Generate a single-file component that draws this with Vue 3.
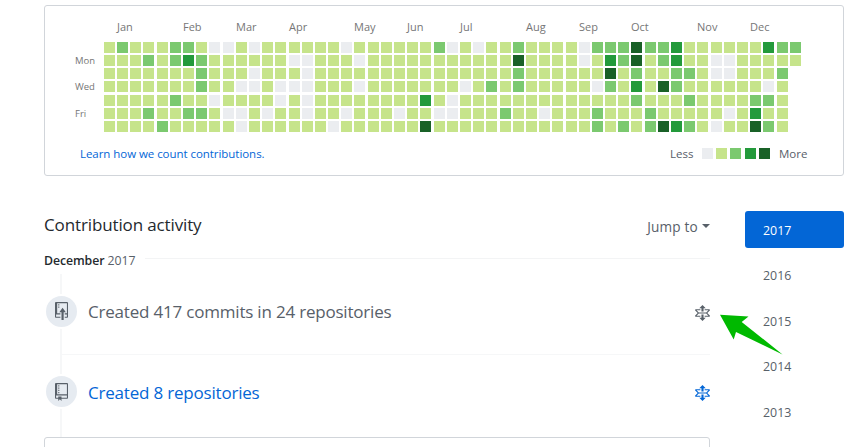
<script setup>
const exceptions = [
  { 1: 2, 5: 2, 6: 2, 8: 0, 9: 0, 11: 0, 18: 0, 25: 2, 26: 0, 28: 0, 31: 2, 36: 0, 37: 2, 38: 2, 39: 2, 40: 4, 41: 2, 42: 2, 43: 3, 50: 3, 51: 2, 52: 2 },
  { 3: 2, 5: 2, 6: 3, 7: 2, 14: 0, 15: 0, 19: 0, 31: 4, 36: 0, 38: 3, 39: 2, 40: 4, 42: 2, 43: 3, 46: 0, 47: 0 },
  { 7: 2, 11: 0, 15: 0, 31: 2, 38: 4, 40: 2, 43: 2, 44: 2, 46: 0, 47: 0, 51: 2 },
  { 7: 2, 10: 0, 11: 0, 13: 0, 14: 0, 15: 0, 19: 0, 27: 0, 29: 2, 31: 2, 37: 0, 38: 2, 40: 3, 42: 4, 43: 2, 50: 0 },
  { 5: 2, 8: 0, 13: 0, 15: 0, 24: 3, 26: 0, 40: 2, 44: 2, 49: 2, 50: 2 },
  { 3: 2, 6: 2, 7: 2, 9: 0, 10: 0, 12: 0, 15: 0, 18: 0, 22: 0, 25: 0, 26: 0, 30: 2, 33: 0, 37: 2, 41: 2, 47: 0, 49: 3 },
  { 4: 2, 10: 0, 17: 0, 24: 4, 37: 2, 39: 2, 41: 2, 42: 4, 43: 3, 44: 2, 46: 0, 49: 4, 50: 2 },
]
const months = { 1: 'Jan', 6: 'Feb', 10: 'Mar', 14: 'Apr', 19: 'May', 23: 'Jun', 27: 'Jul', 32: 'Aug', 36: 'Sep', 40: 'Oct', 45: 'Nov', 49: 'Dec' }
const wideGaps = [4, 9, 14, 20, 25, 30, 35, 41, 46, 51]
const weeks = Array.from({ length: 53 }, (_, w) => ({
  month: months[w] ?? '',
  wide: wideGaps.includes(w),
  days: exceptions.slice(0, w === 52 ? 2 : 7).map((row) => row[w] ?? 1),
}))
const years = [2017, 2016, 2015, 2014, 2013]
const pushIcon = 'M4 3H3V2h1v1zM3 5h1V4H3v1zm4 0L4 9h2v7h2V9h2L7 5zm4-5H1C.45 0 0 .45 0 1v12c0 .55.45 1 1 1h4v-1H1v-2h4v-1H2V1h9.02L11 10H9v1h2v2H9v1h2c.55 0 1-.45 1-1V1c0-.55-.45-1-1-1z'
const repoIcon = 'M4 9H3V8h1v1zm0-3H3v1h1V6zm0-2H3v1h1V4zm0-2H3v1h1V2zm8-1v12c0 .55-.45 1-1 1H6v2l-1.5-1.5L3 16v-2H1c-.55 0-1-.45-1-1V1c0-.55.45-1 1-1h10c.55 0 1 .45 1 1zm-1 10H1v2h2v-1h3v1h5v-2zm0-10H2v9h9V1z'
const unfoldIcon = 'M11.5 7.5L14 10c0 .55-.45 1-1 1H9v-1h3.5l-2-2h-7l-2 2H5v1H1c-.55 0-1-.45-1-1l2.5-2.5L0 5c0-.55.45-1 1-1h4v1H1.5l2 2h7l2-2H9V4h4c.55 0 1 .45 1 1l-2.5 2.5zM6 6h2V3h2L7 0 4 3h2v3zm2 3H6v3H4l3 3 3-3H8V9z'
const items = [
  { text: 'Created 417 commits in 24 repositories', icon: pushIcon, active: false },
  { text: 'Created 8 repositories', icon: repoIcon, active: true },
]
</script>

<template>
  <main class="page">
    <section class="card">
      <div class="graph">
        <div class="weekdays">
          <span>Mon</span><span>Wed</span><span>Fri</span>
        </div>
        <div v-for="(week, w) in weeks" :key="w" class="week" :class="{ wide: week.wide }">
          <span class="month">{{ week.month }}</span>
          <i v-for="(level, d) in week.days" :key="d" class="day" :class="'l' + level"></i>
        </div>
      </div>
      <div class="card-foot">
        <a class="learn">Learn how we count contributions.</a>
        <div class="legend">
          <span class="less">Less</span>
          <i v-for="n in 5" :key="n" class="swatch" :class="'l' + (n - 1)"></i>
          <span class="more">More</span>
        </div>
      </div>
    </section>

    <div class="columns">
      <section class="activity">
        <header class="head">
          <h2>Contribution activity</h2>
          <span class="jump">Jump to <i class="caret"></i></span>
        </header>
        <h3 class="period"><span><b>December</b> 2017</span></h3>
        <div class="timeline">
          <article v-for="item in items" :key="item.text" class="item" :class="{ active: item.active }">
            <span class="badge">
              <svg width="13" height="18" viewBox="0 0 12 16" preserveAspectRatio="none"><path :d="item.icon" /></svg>
            </span>
            <span class="label">{{ item.text }}</span>
            <svg class="unfold" width="15" height="16" viewBox="0 0 14 15" preserveAspectRatio="none"><path :d="unfoldIcon" /></svg>
          </article>
        </div>
        <div class="repo-list"></div>
      </section>
      <nav class="years">
        <a v-for="(year, i) in years" :key="year" :class="{ selected: i === 0 }">{{ year }}</a>
      </nav>
    </div>

    <svg class="pointer" width="64" height="42" viewBox="719 313 64 42">
      <path d="M720 314.7L748.5 316.4L741.7 322L782.5 354.4L736 332L733.7 339.4Z" />
    </svg>
  </main>
</template>

<style>
body { margin: 0; background: #fff; overflow: hidden; }
</style>

<style scoped>
.page {
  position: relative;
  box-sizing: border-box;
  width: 849px;
  height: 447px;
  padding: 5px 5px 0 44px;
  overflow: hidden;
  font-family: "Open Sans", "Noto Sans", sans-serif;
  color: #586069;
}
.card {
  box-sizing: border-box;
  width: 800px;
  height: 171px;
  border: 1px solid #d1d5da;
  border-radius: 3px;
}
.graph { display: flex; padding: 13px 0 0 30px; height: 114px; }
.weekdays {
  display: flex;
  flex-direction: column;
  box-sizing: border-box;
  width: 29px;
  padding-top: 35px;
  font-size: 9.5px;
  line-height: 14px;
  color: #767676;
}
.weekdays span { height: 26px; }
.weekdays span:last-child { padding-top: 1px; }
.week { width: 11px; margin-right: 2px; display: flex; flex-direction: column; gap: 2px; }
.week.wide { margin-left: 1px; }
.month {
  width: 11px;
  height: 21px;
  line-height: 15px;
  white-space: nowrap;
  font-size: 11px;
  color: #767676;
}
.day { width: 11px; height: 11px; }
.day:nth-of-type(5) { margin-top: 1px; }
.l0 { background: #ebedf0; }
.l1 { background: #c6e48b; }
.l2 { background: #7bc96f; }
.l3 { background: #239a3b; }
.l4 { background: #196127; }
.card-foot {
  display: flex;
  justify-content: space-between;
  padding: 10px 36px 0 35px;
  font-size: 11.5px;
  line-height: 22px;
}
.learn { color: #0366d6; letter-spacing: -0.05px; }
.legend { display: flex; align-items: center; gap: 3px; height: 20px; }
.less { width: 23px; margin-right: 6px; padding-top: 2px; }
.more { width: 28px; margin-left: 6px; padding-top: 2px; }
.swatch { width: 11px; height: 11px; }
.swatch:nth-of-type(3) { margin-right: 1px; }
.columns { display: flex; justify-content: space-between; padding-top: 35px; }
.activity { width: 666px; }
.head { display: flex; justify-content: space-between; height: 38px; }
h2 {
  margin: 0;
  font-weight: 400;
  font-size: 17px;
  line-height: 28px;
  letter-spacing: -0.13px;
  color: #24292e;
}
.jump {
  display: flex;
  align-items: center;
  gap: 4px;
  height: 30px;
  font-size: 13.6px;
  letter-spacing: 0.2px;
}
.caret { border: 4.5px solid transparent; border-top-color: #586069; border-bottom: 0; }
.period {
  display: flex;
  align-items: center;
  gap: 10px;
  margin: 0;
  height: 21px;
  font-size: 12.3px;
  font-weight: 500;
  letter-spacing: -0.08px;
}
.period span { padding-top: 2px; }
.period b { font-weight: 600; color: #24292e; }
.period::after { content: ""; flex: 1; height: 1px; margin-top: -3px; background: #f3f4f5; }
.timeline {
  margin-top: 4px;
  background: linear-gradient(#f6f7f8, #f6f7f8) 16px 0 / 2px 100% no-repeat;
}
.item {
  display: flex;
  align-items: center;
  box-sizing: border-box;
  height: 81px;
  padding-bottom: 7px;
  background: linear-gradient(#f6f7f8, #f6f7f8) 18px 100% / 648px 1px no-repeat;
}
.item.active { height: 82px; padding-bottom: 9px; background: none; }
.badge {
  display: flex;
  align-items: center;
  justify-content: center;
  width: 31px;
  height: 31px;
  border: 2px solid #fff;
  border-radius: 50%;
  background: #e6ebf1;
}
.badge svg { fill: #586069; }
.label { flex: 1; margin-left: 9px; font-size: 17px; letter-spacing: -0.2px; }
.active .label { padding-top: 2px; }
.unfold { margin-top: 3px; fill: #586069; }
.active .label { color: #0366d6; }
.active .unfold { fill: #0366d6; }
.repo-list {
  height: 40px;
  border: 1px solid #d1d5da;
  border-radius: 3px;
  box-sizing: border-box;
}
.years { display: flex; flex-direction: column; gap: 8.4px; width: 99px; }
.years a {
  box-sizing: border-box;
  height: 37px;
  padding-left: 18px;
  border-radius: 3px;
  font-size: 12.4px;
  line-height: 39px;
}
.years .selected { color: #fff; background: #0366d6; }
.pointer { position: absolute; left: 719px; top: 313px; fill: #00b900; }
</style>
